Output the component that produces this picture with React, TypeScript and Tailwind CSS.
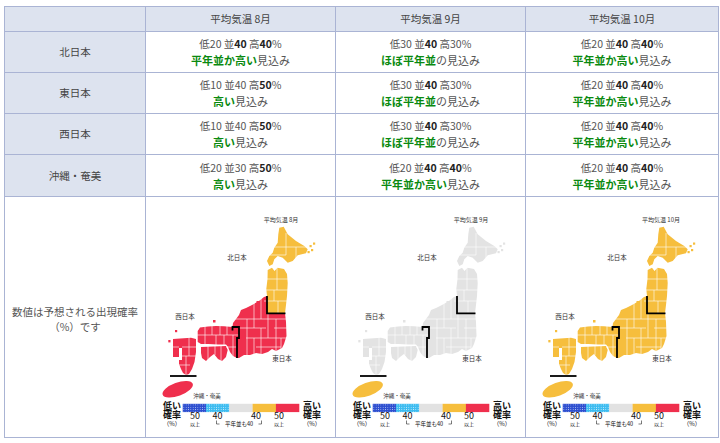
import React from "react";

const FONT = '"Noto Sans CJK JP", "Noto Sans", sans-serif';
const RED = "#ef2f4d";
const YEL = "#f6be3d";
const GRY = "#e3e3e3";

type MapColors = { north: string; east: string; west: string; oki: string };

const HOKKAIDO =
  "133.3,30.7 137.7,29.7 141.7,37.3 150,44 158.3,49 161.7,52.3 160,56.3 151.7,58.3 146.7,64 141.7,65.7 136.7,60.7 131.7,59 128.3,62.3 126.7,67.3 123.3,69 121,64 123.3,59 126.7,55.7 128.3,50.7 131.7,45.7 132.3,37.3";
const TOHOKU =
  "121.7,73 126,70.7 128.5,74 131.5,70.7 138,72 141,77 141.7,86 141,99 140,108 139,116.3 121,116.3 121,99 120.3,92 121.5,82";
const EAST =
  "121,99 121,116.3 139,116.3 140,125 140.5,139 138,147 136,151 130,154 126,152 122,155 116,157 110,156 104,158 98,158 93,161 91,161 91,141 93,141 93,130 86.5,130 87,126 90,122 93,118 95,113 100,111 106,108 113,104 118,100";
const WEST_HONSHU =
  "51.7,134 54,130.5 62,129.5 70,129 78,129.3 86.5,130 93,130 93,141 91,141 91,161 87,159 84,155 82,150 80,147.5 72,147.5 62,147 55,147 51.7,145";
const SHIKOKU =
  "55,150 80,149 81.7,153 80,160 76,164 72,162 68,157 64,160 60,164 56,161 55,156";
const KYUSHU =
  "27,142 45,140.7 50,142 50,155 48.5,165 46,172 43,177 40,178 37,176 35,172 33,167 33,163 36,163 36,151 33,151 33,160 27,160";

const GRID_LINES: [number, number, number, number][] = [
  // Hokkaido
  [140, 36, 140, 58],
  [128, 50, 160, 50],
  [121, 58, 140, 58],
  [150, 50, 150, 62],
  // Tohoku
  [118, 82, 145, 82],
  [131, 70, 131, 93],
  [118, 93, 145, 93],
  [128, 93, 128, 104],
  [118, 104, 145, 104],
  [132, 104, 132, 116],
  // East
  [88, 122, 140, 122],
  [93, 131, 120, 131],
  [128, 131, 145, 131],
  [100, 141, 145, 141],
  [110, 150, 135, 150],
  [101, 122, 101, 160],
  [108, 106, 108, 131],
  [108, 141, 108, 160],
  [115, 101, 115, 122],
  [115, 131, 115, 160],
  [122, 117, 122, 141],
  [130, 122, 130, 155],
  [135, 141, 135, 152],
  // West Honshu
  [59, 127, 59, 148],
  [66, 127, 66, 138],
  [70, 138, 70, 148],
  [74, 127, 74, 138],
  [78, 138, 78, 148],
  [81, 127, 81, 138],
  [50, 138, 93, 138],
  [87, 138, 87, 161],
  [80, 150, 91, 150],
  // Shikoku
  [62, 148, 62, 165],
  [69, 148, 69, 158],
  [75, 148, 75, 165],
  // Kyushu
  [26, 150, 33, 150],
  [36, 150, 51, 150],
  [36, 159, 51, 159],
  [33, 168, 44, 168],
  [43, 140, 43, 159],
  [40, 159, 40, 178],
];

function JapanMap({ id, month, c }: { id: string; month: string; c: MapColors }) {
  const segX = [36.7, 60, 83.3, 106.6, 129.9];
  return (
    <svg width="190" height="241" viewBox="0 0 190 241" fontFamily={FONT} className="block">
      <defs>
        <pattern id={`dk-${id}`} width="2.33" height="2.33" patternUnits="userSpaceOnUse" x="36.7" y="206.8">
          <rect width="2.33" height="2.33" fill="#2d4fd0" />
          <rect x="0.75" y="0.75" width="0.8" height="0.8" fill="#c9d3f5" />
        </pattern>
        <pattern id={`lt-${id}`} width="2.33" height="2.33" patternUnits="userSpaceOnUse" x="60" y="206.8">
          <rect width="2.33" height="2.33" fill="#3cbcf0" />
          <rect x="0.75" y="0.75" width="0.8" height="0.8" fill="#e3f6fd" />
        </pattern>
      </defs>

      {/* shapes */}
      <polygon points={HOKKAIDO} fill={c.north} />
      {[
        [163.5, 48],
        [167, 45.5],
        [161.5, 54],
        [165, 52],
      ].map(([x, y], i) => (
        <rect key={i} x={x} y={y} width="2.2" height="2.2" fill={c.north} />
      ))}
      <polygon points={TOHOKU} fill={c.north} />
      <polygon points={EAST} fill={c.east} />
      <rect x="110.5" y="104" width="2.6" height="2.6" fill={c.east} />
      <polygon points={WEST_HONSHU} fill={c.west} />
      <polygon points={SHIKOKU} fill={c.west} />
      <polygon points={KYUSHU} fill={c.west} />
      <rect x="67" y="123" width="2.5" height="2.5" fill={c.west} />
      <rect x="29" y="133" width="2.2" height="2.2" fill={c.west} />
      <rect x="22.3" y="143" width="2.2" height="2.4" fill={c.west} />
      <ellipse cx="31.7" cy="192.3" rx="16" ry="6.6" transform="rotate(-20 31.7 192.3)" fill={c.oki} />

      {/* prefecture lines */}
      {GRID_LINES.map(([x1, y1, x2, y2], i) => (
        <line key={i} x1={x1} y1={y1} x2={x2} y2={y2} stroke="#ffffff" strokeWidth="0.6" />
      ))}

      {/* region borders */}
      <path d="M121,99 V116.3 H139.5" fill="none" stroke="#000" strokeWidth="1.8" />
      <path d="M86.5,133.5 V130 H93 V141 H91 V161" fill="none" stroke="#000" strokeWidth="1.8" />
      <path d="M24,179 H50.5" fill="none" stroke="#000" strokeWidth="1.8" />

      {/* labels */}
      <g fill="#333" textAnchor="middle">
        <text x="135" y="25" fontSize="6">平均気温 {month}</text>
        <text x="91" y="62.5" fontSize="6.5">北日本</text>
        <text x="39" y="121.5" fontSize="6.5">西日本</text>
        <text x="136" y="163.5" fontSize="6.5">東日本</text>
        <text x="61" y="200.5" fontSize="5.5">沖縄・奄美</text>
      </g>

      {/* legend */}
      <rect x={segX[0]} y="206.8" width="23.4" height="8.3" fill={`url(#dk-${id})`} />
      <rect x={segX[1]} y="206.8" width="23.4" height="8.3" fill={`url(#lt-${id})`} />
      <rect x={segX[2]} y="206.8" width="23.4" height="8.3" fill="#e2e2e2" />
      <rect x={segX[3]} y="206.8" width="23.4" height="8.3" fill={YEL} />
      <rect x={segX[4]} y="206.8" width="23.4" height="8.3" fill={RED} />

      <g fill="#111" textAnchor="middle">
        <text x="26" y="211.6" fontSize="9" fontWeight="700">低い</text>
        <text x="26" y="220.6" fontSize="9" fontWeight="700">確率</text>
        <text x="26" y="228.6" fontSize="6">（%）</text>
        <text x="166" y="211.6" fontSize="9" fontWeight="700">高い</text>
        <text x="166" y="220.6" fontSize="9" fontWeight="700">確率</text>
        <text x="166" y="228.6" fontSize="6">（%）</text>

        <text x="49" y="221.6" fontSize="9">50</text>
        <text x="49" y="228.8" fontSize="5">以上</text>
        <text x="71.5" y="221.6" fontSize="9">40</text>
        <text x="110" y="221.6" fontSize="9">40</text>
        <text x="133" y="221.6" fontSize="9">50</text>
        <text x="133" y="228.8" fontSize="5">以上</text>
        <text x="93" y="228.8" fontSize="5.5">平年並も40</text>
      </g>
      <path d="M70.5,223.5 V227 H73.5" fill="none" stroke="#222" strokeWidth="0.6" />
      <path d="M115.5,223.5 V227 H112.5" fill="none" stroke="#222" strokeWidth="0.6" />
    </svg>
  );
}

type Cell = { n: [string, boolean][]; g: string; r: string };

const A: Cell = { n: [["20", false], ["40", true], ["40", true]], g: "平年並か高い", r: "見込み" };
const N: Cell = { n: [["30", false], ["40", true], ["30", false]], g: "ほぼ平年並", r: "の見込み" };

const ROWS: { name: string; h: string; cells: Cell[] }[] = [
  { name: "北日本", h: "h-[41px]", cells: [A, N, A] },
  {
    name: "東日本",
    h: "h-[41px]",
    cells: [{ n: [["10", false], ["40", false], ["50", true]], g: "高い", r: "見込み" }, N, A],
  },
  {
    name: "西日本",
    h: "h-[41px]",
    cells: [{ n: [["10", false], ["40", false], ["50", true]], g: "高い", r: "見込み" }, N, A],
  },
  {
    name: "沖縄・奄美",
    h: "h-[42px]",
    cells: [{ n: [["20", false], ["30", false], ["50", true]], g: "高い", r: "見込み" }, A, A],
  },
];

function Num({ v }: { v: [string, boolean] }) {
  return v[1] ? <b className="font-bold text-[#222]">{v[0]}</b> : <span>{v[0]}</span>;
}

function DataCell({ c }: { c: Cell }) {
  return (
    <div className="flex flex-col items-center justify-center border-r border-b border-[#aab4d4] bg-white leading-[17px] text-[#555]">
      <div className="text-[10.5px]">
        低<Num v={c.n[0]} /> 並<Num v={c.n[1]} /> 高<Num v={c.n[2]} />%
      </div>
      <div className="text-[11px]">
        <b className="font-bold text-[#0a8a10]">{c.g}</b>
        {c.r}
      </div>
    </div>
  );
}

const HEAD = "flex items-center justify-center border-r border-b border-[#aab4d4] bg-[#dde3ef] text-[10.5px] text-[#444]";

export default function App() {
  return (
    <div className="h-[443px] w-[720px] overflow-hidden bg-white pl-[4px] pt-[6px] font-['Noto_Sans_CJK_JP','Noto_Sans',sans-serif]">
      <div className="grid w-fit grid-cols-[141px_190px_190px_193px] border-l border-t border-[#aab4d4]">
        <div className={`${HEAD} h-[25px]`} />
        <div className={`${HEAD} h-[25px]`}>平均気温 8月</div>
        <div className={`${HEAD} h-[25px]`}>平均気温 9月</div>
        <div className={`${HEAD} h-[25px]`}>平均気温 10月</div>

        {ROWS.map((row) => (
          <React.Fragment key={row.name}>
            <div className={`${HEAD} ${row.h}`}>{row.name}</div>
            {row.cells.map((c, i) => (
              <DataCell key={i} c={c} />
            ))}
          </React.Fragment>
        ))}

        <div className="flex h-[241px] flex-col items-center justify-center border-r border-b border-[#aab4d4] bg-white pt-[3px] text-center text-[10.5px] leading-[15px] text-[#555]">
          <div>数値は予想される出現確率</div>
          <div>（%）です</div>
        </div>
        <div className="h-[241px] border-r border-b border-[#aab4d4] bg-white">
          <JapanMap id="m8" month="8月" c={{ north: YEL, east: RED, west: RED, oki: RED }} />
        </div>
        <div className="h-[241px] border-r border-b border-[#aab4d4] bg-white">
          <JapanMap id="m9" month="9月" c={{ north: GRY, east: GRY, west: GRY, oki: YEL }} />
        </div>
        <div className="h-[241px] border-r border-b border-[#aab4d4] bg-white">
          <JapanMap id="m10" month="10月" c={{ north: YEL, east: YEL, west: YEL, oki: YEL }} />
        </div>
      </div>
    </div>
  );
}
